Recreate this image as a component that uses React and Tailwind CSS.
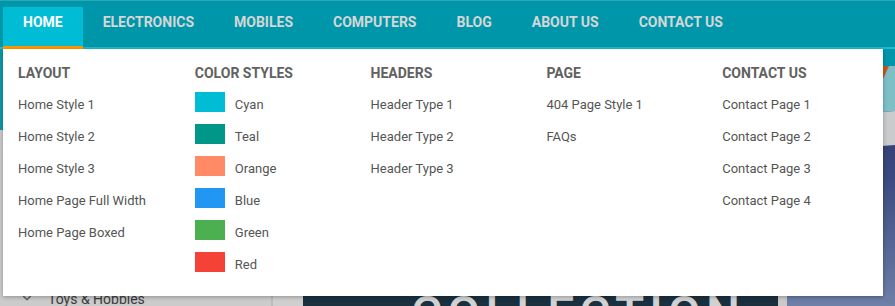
import React from "react";
import { ChevronDown } from "lucide-react";

const navItems = ["Home", "Electronics", "Mobiles", "Computers", "Blog", "About Us", "Contact Us"];

const menuColumns = [
  {
    title: "Layout",
    links: ["Home Style 1", "Home Style 2", "Home Style 3", "Home Page Full Width", "Home Page Boxed"],
  },
  {
    title: "Color Styles",
    swatches: [
      { name: "Cyan", color: "bg-[#00bcd4]" },
      { name: "Teal", color: "bg-[#009688]" },
      { name: "Orange", color: "bg-[#ff8a65]" },
      { name: "Blue", color: "bg-[#2196f3]" },
      { name: "Green", color: "bg-[#4caf50]" },
      { name: "Red", color: "bg-[#f44336]" },
    ],
  },
  { title: "Headers", links: ["Header Type 1", "Header Type 2", "Header Type 3"] },
  { title: "Page", links: ["404 Page Style 1", "FAQs"] },
  { title: "Contact Us", links: ["Contact Page 1", "Contact Page 2", "Contact Page 3", "Contact Page 4"] },
];

const SlideArt = () => (
  <svg width="108" height="257" viewBox="0 0 108 257" className="block">
    <defs>
      <linearGradient id="navyFade" x1="0" y1="0" x2="0" y2="1">
        <stop offset="0" stopColor="#27295a" />
        <stop offset="0.5" stopColor="#3a4a80" />
        <stop offset="1" stopColor="#6e7fa8" />
      </linearGradient>
    </defs>
    <rect x="0" y="0" width="108" height="257" fill="url(#navyFade)" />
    <rect x="0" y="0" width="108" height="17" fill="#0096a9" />
    <polygon points="0,17 108,17 108,62 0,70" fill="#7cbfc6" />
    <polygon points="0,70 108,62 108,96 0,104" fill="#c9cbcc" />
    <polygon points="96,17 102,17 96,30" fill="#c8571f" />
  </svg>
);

const MegaMenu = () => (
  <div className="absolute left-[3px] top-[49px] w-[880px] h-[247px] bg-white shadow-[0_1px_4px_rgba(0,0,0,0.3)] grid grid-cols-5 pt-[14px] pl-px">
    {menuColumns.map((col) => (
      <div key={col.title} className="pl-[15px] first:pl-[14px]">
        <div className="text-[14px] leading-[20px] font-bold uppercase text-[#616161] mb-[6px]">
          {col.title}
        </div>
        {col.links &&
          col.links.map((link) => (
            <div key={link} className="text-[13px] leading-[32px] text-[#555]">
              {link}
            </div>
          ))}
        {col.swatches &&
          col.swatches.map((s) => (
            <div key={s.name} className="flex h-[32px] gap-[10px]">
              <span className={`mt-[3px] w-[30px] h-[20px] ${s.color}`} />
              <span className="text-[13px] leading-[32px] text-[#555]">{s.name}</span>
            </div>
          ))}
      </div>
    ))}
  </div>
);

export default function App() {
  return (
    <div className="relative w-[895px] h-[306px] overflow-hidden bg-[#cbcbcb] font-['Roboto',sans-serif]">
      <header className="h-[49px] border-t border-[#2ea6b6] bg-[linear-gradient(to_bottom,#0096a9_46px,#1fbccf_46px)]">
        <nav className="flex h-full pl-[3px] pt-[6px]">
          {navItems.map((item, i) => (
            <a
              key={item}
              className={
                i === 0
                  ? "px-5 pt-[5px] text-[14px] leading-[20px] font-bold uppercase text-white bg-[#00bcd4] border-b-[3px] border-[#ff9800]"
                  : "px-5 pt-[5px] text-[14px] leading-[20px] font-bold uppercase text-[#d6d6d6]"
              }
            >
              {item}
            </a>
          ))}
        </nav>
      </header>

      <div className="flex h-[257px]">
        <aside className="w-[273px] flex flex-col border-r-2 border-[#bcbcbc]">
          <div className="h-[81px] bg-[#0e97a9]" />
          <div className="flex-1 bg-[#cbcbcb] flex items-end">
            <div className="flex items-start gap-[14px] pl-[20px] h-[13px] text-[14px] leading-[18px] text-[#3a3a3a]">
              <ChevronDown size={14} strokeWidth={2} className="text-[#555] -mt-[2px]" />
              <span className="-mt-[3px]">Toys &amp; Hobbies</span>
            </div>
          </div>
        </aside>
        <div className="w-[30px] bg-[#cfcfcf]" />
        <div className="w-[475px] bg-[#1a303f] pl-[108px] pt-[241px]">
          <div className="text-[48px] leading-none font-medium tracking-[5px] text-[#d2d2d2] whitespace-nowrap">
            COLLECTION
          </div>
        </div>
        <div className="w-[9px] bg-[#c9c9c9]" />
        <div className="w-[108px]">
          <SlideArt />
        </div>
      </div>

      <MegaMenu />
    </div>
  );
}
